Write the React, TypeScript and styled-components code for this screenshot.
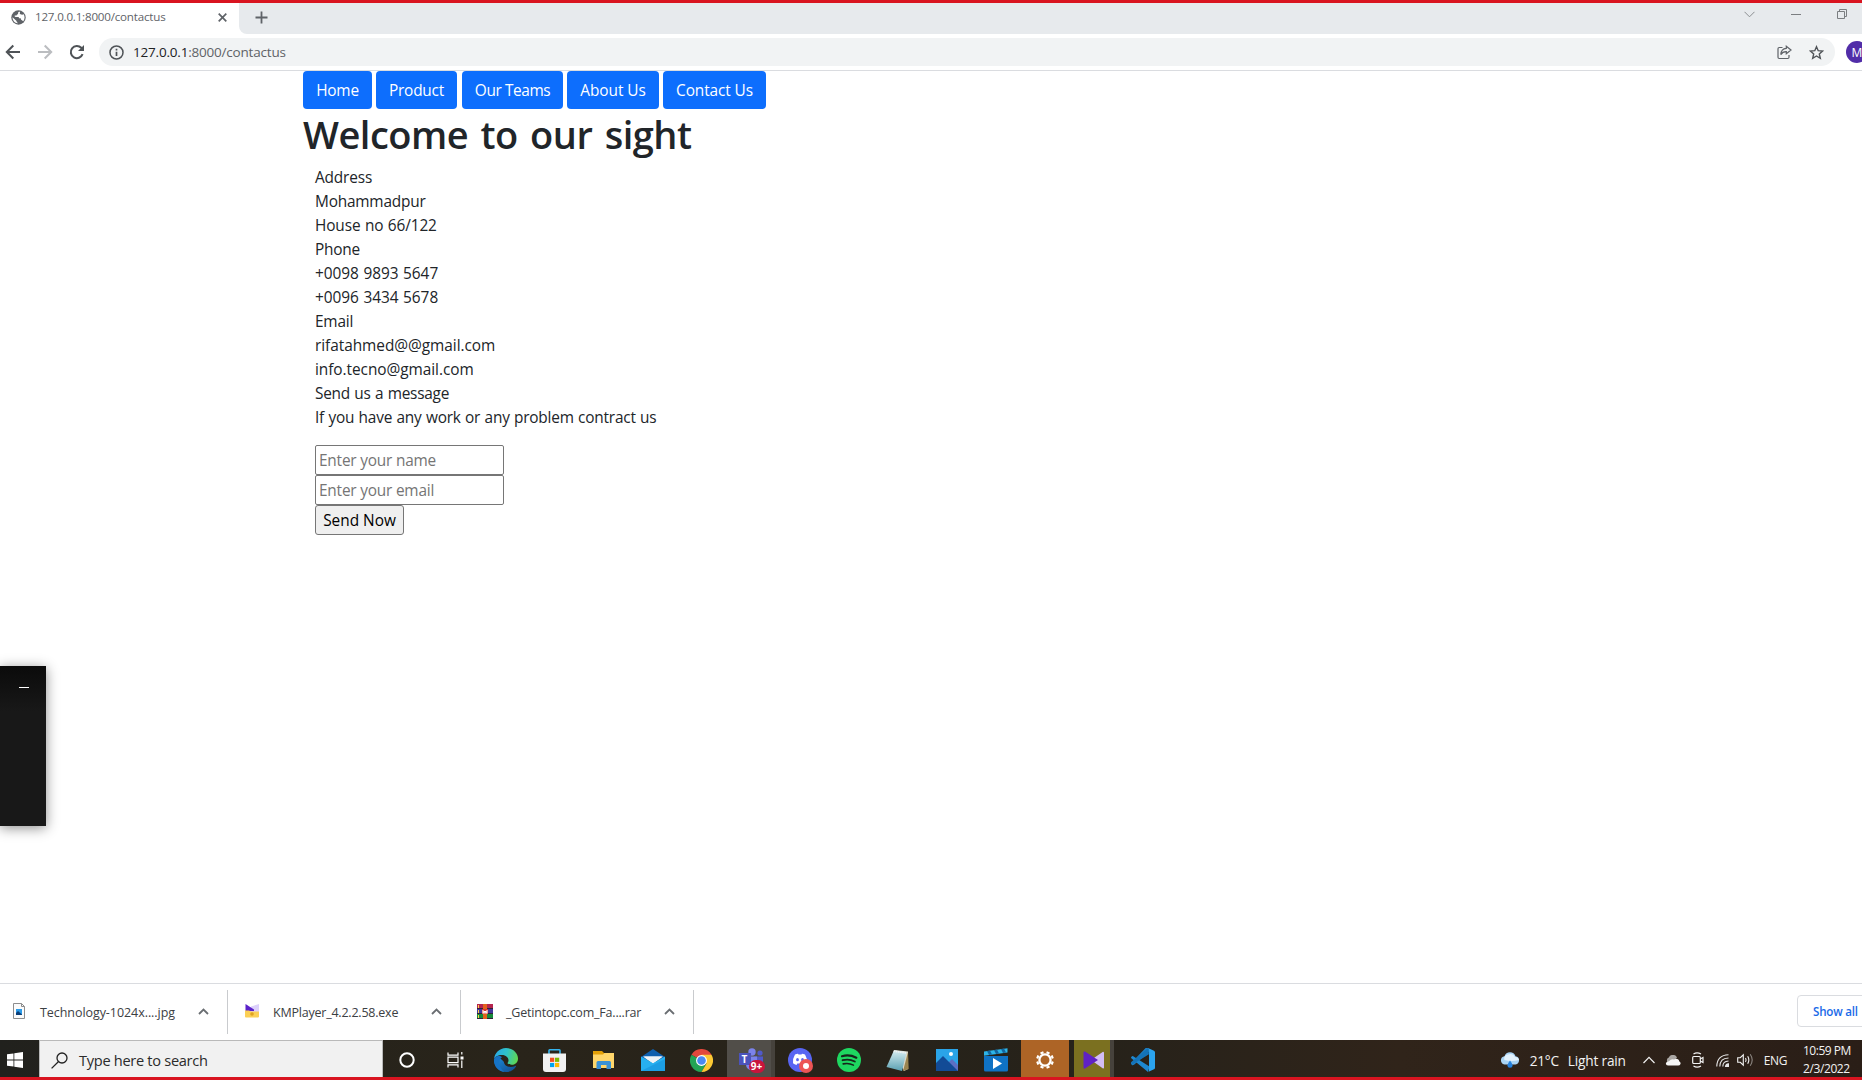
import React from "react";
import styled, { createGlobalStyle } from "styled-components";

const GlobalStyle = createGlobalStyle`
  * { box-sizing: border-box; }
  html, body { margin: 0; padding: 0; background: #fff; overflow: hidden; }
  body, button, input { font-family: "Open Sans", "Noto Sans", sans-serif; }
  svg { display: block; flex: none; }
`;

const Screen = styled.div`
  width: 1862px;
  height: 1080px;
  display: flex;
  flex-direction: column;
  overflow: hidden;
  background: #fff;
  border-top: 3px solid #d91420;
  border-bottom: 3px solid #d91420;
`;

const Text = styled.span<{ $size: number; $spacing?: number; $color?: string; $weight?: number }>`
  font-size: ${(p) => p.$size}px;
  letter-spacing: ${(p) => p.$spacing ?? 0}px;
  color: ${(p) => p.$color ?? "inherit"};
  font-weight: ${(p) => p.$weight ?? 400};
  white-space: pre;
`;

/* Browser chrome */
const TabStrip = styled.div`
  height: 31px;
  flex: none;
  display: flex;
  background: #fff;
`;
const Tab = styled.div`
  width: 239px;
  height: 31px;
  display: flex;
  align-items: center;
  padding: 0 12px 3px 11px;
`;
const TabTitle = styled.div`
  flex: 1;
  padding: 0 0 2px 9px;
  display: flex;
`;
const StripRest = styled.div`
  flex: 1;
  display: flex;
  align-items: center;
  justify-content: space-between;
  padding: 0 15px 3px 16px;
  background: #e7eaed;
  border-bottom-left-radius: 8px;
`;
const WindowButtons = styled.div`
  display: flex;
  align-items: center;
  gap: 36px;
  padding-bottom: 6px;
`;
const Toolbar = styled.div`
  height: 37px;
  flex: none;
  display: flex;
  align-items: center;
  border-bottom: 1px solid #dadce0;
  padding-left: 5px;
`;
const NavIcons = styled.div`
  width: 94px;
  flex: none;
  display: flex;
  align-items: center;
  gap: 16px;
`;
const AddressBar = styled.div`
  width: 1736px;
  flex: none;
  height: 28px;
  border-radius: 14px;
  background: #f1f3f4;
  display: flex;
  align-items: center;
  padding: 0 11px 0 10px;
`;
const Url = styled.div`
  flex: 1;
  padding-left: 9px;
  display: flex;
`;
const AddressIcons = styled.div`
  display: flex;
  gap: 17px;
`;
const Avatar = styled.div`
  width: 22px;
  height: 22px;
  margin-left: 11px;
  flex: none;
  border-radius: 50%;
  background: #512da8;
  color: #fff;
  display: flex;
  align-items: center;
  justify-content: center;
  font-size: 12px;
`;

/* Page */
const Page = styled.main`
  flex: 1;
  padding-left: 303px;
  color: #212529;
`;
const NavBar = styled.nav`
  display: flex;
  height: 38px;
`;
const NavButton = styled.button<{ $w: number; $gap: number; $spacing: number }>`
  width: ${(p) => p.$w}px;
  height: 38px;
  margin: 0 ${(p) => p.$gap}px 0 0;
  padding: 0;
  border: 0;
  border-radius: 4px;
  background: #0d6efd;
  color: #fff;
  font-size: 15.4px;
  letter-spacing: ${(p) => p.$spacing}px;
  white-space: nowrap;
`;
const Heading = styled.h1`
  margin: 0 0 8px;
  height: 48px;
  line-height: 50px;
  font-size: 38px;
  letter-spacing: -0.5px;
  word-spacing: 3px;
  font-weight: 600;
  white-space: nowrap;
`;
const Content = styled.div`
  padding-left: 12px;
`;
const Line = styled.div`
  height: 24px;
  line-height: 24px;
  padding-top: 1px;
  word-spacing: 0.6px;
  display: flex;
`;
const Form = styled.form`
  margin-top: 16px;
  display: flex;
  flex-direction: column;
  align-items: flex-start;
`;
const Field = styled.input`
  width: 189px;
  height: 30px;
  padding: 2px 3px 1px;
  border: 1px solid #767676;
  border-radius: 2px;
  background: #fff;
  font-size: 15.4px;
  letter-spacing: -0.2px;
  &::placeholder { color: #757575; opacity: 1; }
`;
const Submit = styled.button`
  width: 89px;
  height: 30px;
  padding: 1px 0 0;
  border: 1px solid #767676;
  border-radius: 3px;
  background: #efefef;
  color: #000;
`;

const FloatingPanel = styled.aside`
  position: absolute;
  left: 0;
  top: 666px;
  width: 46px;
  height: 160px;
  display: flex;
  justify-content: flex-end;
  padding: 21px 17px 0 0;
  background: linear-gradient(#0b0b0b, #181818 45px);
  box-shadow: 0 2px 12px rgba(0, 0, 0, 0.45);
`;
const Minimize = styled.span`
  width: 10px;
  height: 1px;
  background: #fff;
`;

/* Downloads shelf */
const Shelf = styled.div`
  height: 57px;
  flex: none;
  display: flex;
  border-top: 1px solid #dadce0;
  padding-top: 6px;
  background: #fff;
`;
const Download = styled.div<{ $w: number; $pad: number }>`
  width: ${(p) => p.$w}px;
  height: 44px;
  display: flex;
  align-items: center;
  padding: 0 18px 2px ${(p) => p.$pad}px;
  border-right: 1px solid #c9cbce;
`;
const FileName = styled.div<{ $pad: number }>`
  flex: 1;
  padding-left: ${(p) => p.$pad}px;
  padding-top: 3px;
  display: flex;
`;
const ShowAll = styled.button`
  margin: 5px -20px 0 auto;
  width: 85px;
  height: 32px;
  padding: 0 0 0 15px;
  text-align: left;
  background: #fff;
  border: 1px solid #dadce0;
  border-radius: 4px;
`;

/* Taskbar */
const Taskbar = styled.div`
  height: 37px;
  flex: none;
  display: flex;
  background: linear-gradient(90deg, #21211d 0, #29241a 500px, #26221a 1100px, #30241a 1400px, #2a1e17 1862px);
  color: #f2f2f2;
`;
const Start = styled.div`
  width: 39px;
  padding: 12px 0 0 7px;
`;
const Search = styled.div`
  width: 344px;
  display: flex;
  align-items: center;
  padding: 2px 0 0 11px;
  gap: 11px;
  background: #f1f1f1;
  border: 1px solid #b9b9b9;
  border-bottom: 0;
`;
const Slot = styled.div<{ $w: number; $lead?: number }>`
  width: ${(p) => p.$w}px;
  flex: none;
  padding-left: ${(p) => p.$lead ?? 0}px;
`;
const Cell = styled.div<{ $bg: string; $w: number; $shift: number; $stacked: boolean }>`
  width: ${(p) => p.$w}px;
  height: 37px;
  display: flex;
  align-items: center;
  justify-content: center;
  padding-top: 3px;
  padding-left: ${(p) => p.$shift}px;
  background: ${(p) => p.$bg};
  border-right: ${(p) => (p.$stacked ? "4px solid #46423c" : "0")};
`;
const Tray = styled.div`
  margin-left: auto;
  display: flex;
  align-items: center;
  padding: 3px 11px 0 0;
`;
const TrayItem = styled.div<{ $gap: number }>`
  margin-right: ${(p) => p.$gap}px;
  display: flex;
`;
const Clock = styled.div`
  width: 48px;
  display: flex;
  flex-direction: column;
  line-height: 18px;
`;

const Globe = () => (
  <svg width="15" height="15" viewBox="0 0 15 15">
    <circle cx="7.5" cy="7.5" r="7.2" fill="#5f6368" />
    <path d="M8.2 1.8c-1 .3-1.6 1.4-.9 2.2-.8.3-1.8.5-1.7 1.6H3.8c-.5.6.1 1.4.9 1.4h2.4c.7 0 1 .7.8 1.3H9.4c.6 0 .8.8.5 1.3l2.4 1.6c1.6-1.9 1.8-5.3.1-7.2-.5 1-1.8 1-2.2.2-.8.1-1.6-.2-1.4-1 .1-.6.3-1 .2-1.400z" fill="#fff" />
    <path d="M1.500 7.300l3.800 3.500c.4.500.5 1.700 1.800 2.400-3.200.1-5.600-2.500-5.600-5.900z" fill="#fff" />
  </svg>
);
const Cross = () => (
  <svg width="9" height="9" viewBox="0 0 9 9" stroke="#5f6368" strokeWidth="1.7"><path d="M.7.7l7.600 7.600M8.300.7L.7 8.300" /></svg>
);
const Plus = () => (
  <svg width="13" height="13" viewBox="0 0 13 13" stroke="#5f6368" strokeWidth="1.8"><path d="M6.500.5v12M.5 6.500h12" /></svg>
);
const Arrow = ({ flip }: { flip?: boolean }) => (
  <svg width="16" height="16" viewBox="0 0 16 16" fill="none" stroke={flip ? "#bbbdc0" : "#4f5357"} strokeWidth="2" transform={flip ? "scale(-1 1)" : undefined}>
    <path d="M15 8H2.500M8.300 1.500L1.800 8l6.500 6.500" />
  </svg>
);
const Reload = () => (
  <svg width="16" height="16" viewBox="0 0 16 16" fill="none" stroke="#4f5357" strokeWidth="2">
    <path d="M13.600 10.200A6.100 6.100 0 1 1 12.300 3.800L14 5.500" />
    <path d="M15 1v6H9z" fill="#4f5357" stroke="none" />
  </svg>
);
const Info = () => (
  <svg width="15" height="15" viewBox="0 0 15 15" fill="none" stroke="#4f5357" strokeWidth="1.5">
    <circle cx="7.500" cy="7.500" r="6.500" /><path d="M7.500 6.700v4.300M7.500 3.800v1.600" strokeWidth="1.700" />
  </svg>
);
const Share = () => (
  <svg width="15" height="15" viewBox="0 0 15 15" fill="none" stroke="#5f6368" strokeWidth="1.200">
    <path d="M5.500 2.500H2.200Q1 2.500 1 3.700v8.600q0 1.200 1.200 1.200h8.600q1.200 0 1.200-1.200V10" />
    <path d="M9.300 1.300L14 5 9.300 8.700V6.700C6.500 6.600 5 7.600 3.800 9.600 4 6.200 5.800 3.700 9.300 3.400z" />
  </svg>
);
const Star = () => (
  <svg width="15" height="15" viewBox="0 0 15 15" fill="none" stroke="#4f5357" strokeWidth="1.400">
    <path d="M7.500 1.700l1.700 4 4.400.4-3.300 2.900 1 4.300-3.800-2.300-3.800 2.300 1-4.300L1.400 6.100l4.400-.4z" />
  </svg>
);
const ChevronUp = () => (
  <svg width="11" height="7" viewBox="0 0 11 7" fill="none" stroke="#6a6e72" strokeWidth="1.800"><path d="M1 6l4.500-4.500L10 6" /></svg>
);
const JpgFile = () => (
  <svg width="12" height="16" viewBox="0 0 12 16">
    <path d="M.5.5h8l3 3v12H.5z" fill="#fbfbfb" stroke="#8d8d8d" /><path d="M8.500.5v3h3" fill="none" stroke="#8d8d8d" />
    <path d="M3 6h6v6H3z" fill="#2c9be8" /><path d="M3 12V10l2-2 4 3.500v.5z" fill="#0a3e78" />
  </svg>
);
const KmFile = () => (
  <svg width="14" height="14" viewBox="0 0 14 14">
    <path d="M6 2.500L14 0v9H4z" fill="#dcd0fb" /><path d="M.5 0L9 5.500V7H.5z" fill="#5b21c9" />
    <path d="M0 6.500h4L6 7.500h8V12.500q0 1-1 1H1q-1 0-1-1z" fill="#fbcf55" /><circle cx="7" cy="10" r="1.800" fill="#dfa320" />
  </svg>
);
const RarFile = () => (
  <svg width="16" height="15" viewBox="0 0 16 15">
    <path d="M0 0h16v5H0z" fill="#b5244f" /><path d="M0 5h16v5H0z" fill="#41379b" /><path d="M0 10h16v5H0z" fill="#168a3a" />
    <path d="M0 4.500h16M0 9.500h16M0 14.500h16" stroke="#31203a" />
    <path d="M6 0h4v15H6z" fill="#e2611c" /><path d="M5 5h6v5H5z" fill="#d8382c" />
    <path d="M6 6v3h1.300V7.500h1.400V9H10V6" fill="none" stroke="#fff" strokeWidth="1.100" />
    <path d="M1.500 1v3M1.500 6v3M1.500 11v3" stroke="#ffd34a" />
  </svg>
);
const WindowsLogo = () => (
  <svg width="16" height="16" viewBox="0 0 16 16" fill="#fff">
    <path d="M0 2.300l6.500-.9v6.200H0zM7.300 1.300L16 0v7.600H7.300zM0 8.400h6.500v6.200L0 13.700zM7.300 8.400H16V16l-8.700-1.300z" />
  </svg>
);
const Magnifier = () => (
  <svg width="17" height="17" viewBox="0 0 17 17" fill="none" stroke="#222" strokeWidth="1.300"><circle cx="11" cy="6" r="5" /><path d="M7.300 9.700L.6 16.400" /></svg>
);
const Cortana = () => (
  <svg width="16" height="16" viewBox="0 0 16 16"><circle cx="8" cy="8" r="6.700" fill="none" stroke="#fff" strokeWidth="2" /></svg>
);
const TaskView = () => (
  <svg width="17" height="16" viewBox="0 0 17 16" fill="none" stroke="#fff" strokeWidth="1.200">
    <path d="M1 .5v2.700h10V.5M1 15.500v-2.700h10v2.700M1 5.200h10v5.500H1zM14.800 0v2.500M14.800 8.500V16" /><path d="M13.500 4.500h3v3h-3z" fill="#fff" stroke="none" />
  </svg>
);
const Edge = () => (
  <svg width="24" height="24" viewBox="0 0 24 24">
    <defs>
      <linearGradient id="edgeTop" x1="0" y1=".3" x2="1" y2=".5"><stop offset="0" stopColor="#28a8e8" /><stop offset=".5" stopColor="#2fc3c8" /><stop offset="1" stopColor="#5fd752" /></linearGradient>
      <linearGradient id="edgeLow" x1="0" y1="0" x2="1" y2="1"><stop offset="0" stopColor="#1b8ddd" /><stop offset="1" stopColor="#124a8c" /></linearGradient>
    </defs>
    <path d="M0 12C0 17 4 24 12 24c4.500 0 8-2 10-5.500.2-.5-.2-.9-.7-.6-5 2.300-11 .6-11.500-4.200C6 9 1 8 0 12z" fill="url(#edgeLow)" />
    <path d="M.1 11C.5 5 5.500 0 12 0c7 0 12 5 12 10.500 0 4-3 6.300-6.300 6.300-2.500 0-4.400-1-4.200-1.800.1-.5 1-1 1-2.800 0-2.500-2.600-5.200-6.500-5.200C4 7 .8 9 .1 11z" fill="url(#edgeTop)" />
    <path d="M8 9.200C4 11.500 4 19.500 10.500 23.900 4 23.500 0 18 0 12.500 0 8 6 7 8 9.200z" fill="#1673c6" />
  </svg>
);
const Store = () => (
  <svg width="23" height="23" viewBox="0 0 23 23">
    <path d="M6 5V1.500Q6 .8 6.700.8h9.600q.7 0 .7.700V5" fill="none" stroke="#35b4ee" strokeWidth="1.600" />
    <path d="M0 4.500h23V20q0 3-3 3H3q-3 0-3-3z" fill="#f2f2f2" />
    <path d="M7 8.700h4.200v4.200H7z" fill="#f25022" /><path d="M12 8.700h4.200v4.200H12z" fill="#7fba00" /><path d="M7 13.900h4.200v4.200H7z" fill="#00a4ef" /><path d="M12 13.900h4.200v4.200H12z" fill="#ffb900" />
  </svg>
);
const Explorer = () => (
  <svg width="23" height="20" viewBox="0 0 23 20">
    <path d="M1 1h9l2 2h10v4H1z" fill="#e3a008" /><path d="M1 4.500h10L12.500 3H22v15H1z" fill="#ffd66b" />
    <path d="M4.500 19v-6.500q0-1.500 1.500-1.500h11.500q1.500 0 1.500 1.500V19h-4.500v-4h-5.500v4z" fill="#3a92d6" />
  </svg>
);
const Mail = () => (
  <svg width="24" height="22" viewBox="0 0 24 22">
    <path d="M0 8L12 0l12 8v3H0z" fill="#0f5fae" /><path d="M2 7.500h20L12 15z" fill="#f1f1f1" />
    <path d="M0 7.500L12 14l12-6.500V22H0z" fill="#27b0f0" /><path d="M3 7.400h18l-9 6.800z" fill="#eef3f7" /><path d="M0 22l24-12v12z" fill="#1593dc" opacity=".6" />
  </svg>
);
const Chrome = () => (
  <svg width="23" height="23" viewBox="0 0 24 24">
    <path d="M12 12L1.600 6A12 12 0 0 1 22.400 6z" fill="#e2483d" /><path d="M12 12L1.600 6A12 12 0 0 0 12 24l5-9z" fill="#23a455" />
    <path d="M12 6h10.400A12 12 0 0 1 12 24l5.200-9z" fill="#fcc934" /><circle cx="12" cy="12" r="5.700" fill="#fff" /><circle cx="12" cy="12" r="4.500" fill="#4a89f3" />
  </svg>
);
const TeamsWrap = styled.div`
  position: relative;
  width: 26px;
  height: 25px;
`;
const Badge = styled.span`
  position: absolute;
  left: 10px;
  top: 12px;
  width: 16px;
  height: 13px;
  border-radius: 7px;
  background: #c9143c;
  color: #fff;
  font-size: 10px;
  font-weight: 700;
  line-height: 13px;
  text-align: center;
`;
const TeamsLetter = styled.span`
  position: absolute;
  left: 0;
  top: 5px;
  width: 12px;
  height: 12px;
  background: #4b53bc;
  color: #fff;
  font-size: 10px;
  font-weight: 700;
  line-height: 12px;
  text-align: center;
`;
const Teams = () => (
  <TeamsWrap>
    <svg width="26" height="25" viewBox="0 0 26 25">
      <circle cx="13" cy="4" r="3.700" fill="#7b83eb" /><circle cx="21" cy="5" r="2.600" fill="#5059c9" />
      <path d="M15 8.500h9v7a4 4 0 0 1-8 2z" fill="#5059c9" /><path d="M7 8.500h11v8a5.500 5.500 0 0 1-11 0z" fill="#7b83eb" />
    </svg>
    <TeamsLetter>T</TeamsLetter>
    <Badge>9+</Badge>
  </TeamsWrap>
);
const Discord = () => (
  <svg width="25" height="25" viewBox="0 0 25 25">
    <circle cx="12" cy="12" r="12" fill="#5865f2" />
    <path d="M7 6.500Q9 5.600 10 5.700l.5.900h3l.5-.9q1.200 0 3 .8 2.500 4 2 8.800-1.600 1.300-3.500 1.600l-.8-1.400h-5.400l-.8 1.400q-2-.3-3.500-1.600-.5-4.800 2-8.800z" fill="#fff" />
    <ellipse cx="9.500" cy="11.700" rx="1.400" ry="1.600" fill="#5865f2" /><ellipse cx="14.500" cy="11.700" rx="1.400" ry="1.600" fill="#5865f2" />
    <circle cx="18" cy="18" r="7" fill="#ed5555" /><circle cx="18" cy="18" r="3" fill="#fff" />
  </svg>
);
const Spotify = () => (
  <svg width="24" height="24" viewBox="0 0 24 24" fill="none" stroke="#16251b" strokeLinecap="round">
    <circle cx="12" cy="12" r="12" fill="#1ed760" stroke="none" />
    <path d="M5 8.200q7.500-2 14.300 1.500" strokeWidth="2.200" /><path d="M5.600 12.200q6.500-1.700 12.200 1.300" strokeWidth="1.900" /><path d="M6.200 15.900q5.500-1.300 10.200 1.200" strokeWidth="1.600" />
  </svg>
);
const Notepad = () => (
  <svg width="23" height="23" viewBox="0 0 23 23">
    <defs><linearGradient id="note" x1="0" y1="0" x2="0" y2="1"><stop offset="0" stopColor="#d7eef2" /><stop offset="1" stopColor="#5aa0b2" /></linearGradient></defs>
    <path d="M8 1l14 1.500V20l-4 2z" fill="#dcd8c8" /><path d="M22 3l.7 17L17 22z" fill="#9b8551" />
    <path d="M8 1.200L20.500 3 16 22 .5 18z" fill="url(#note)" /><path d="M7.600 2.200L20.500 4" stroke="#f2f2f2" strokeWidth="1.600" strokeDasharray="1.500 .7" />
  </svg>
);
const Photos = () => (
  <svg width="22" height="22" viewBox="0 0 22 22">
    <path d="M0 0h22v22H0z" fill="#2aa4e8" /><path d="M12 14l4-4 6 6v6h-8z" fill="#5c6fc4" /><path d="M0 14L7 7l15 15H0z" fill="#124b96" /><circle cx="15" cy="5" r="2" fill="#fff" />
  </svg>
);
const Movies = () => (
  <svg width="24" height="24" viewBox="0 0 24 24">
    <path d="M0 8h24v14q0 1.500-1.500 1.500h-21Q0 23.500 0 22z" fill="#0f72c4" /><path d="M0 3.500L23.500.2V4.500L0 7.800z" fill="#2cb4e8" />
    <path d="M3 3l3-.5 2 4-3 .5zM10 2l3-.4 2 4-3 .4zM17 1l3-.4 2 4-3 .4z" fill="#13659f" /><path d="M9 10l9 5.600L9 21z" fill="#fff" />
  </svg>
);
const Gear = () => (
  <svg width="20" height="20" viewBox="0 0 20 20" fill="none" stroke="#fff">
    <circle cx="10" cy="10" r="5.600" strokeWidth="2.300" />
    <path d="M16.200 12.600l2 .8M12.600 16.200l.8 2M7.400 16.200l-.8 2M3.800 12.600l-2 .8M3.800 7.400l-2-.8M7.400 3.800l-.8-2M12.600 3.800l.8-2M16.200 7.400l2-.8" strokeWidth="3.200" />
  </svg>
);
const KmPlayer = () => (
  <svg width="22" height="18" viewBox="0 0 22 18">
    <path d="M20 .7q1 0 1 1v15q0 1-1 .8L8 9z" fill="#d3bdf5" /><path d="M.5 1.500Q.5 0 2 .6L15 9 2 17.500Q.5 18 .5 16.600z" fill="#5f22c4" />
  </svg>
);
const VsCode = () => (
  <svg width="24" height="24" viewBox="0 0 24 24">
    <path d="M17 0l1.500 6L3 19.200 2.200 19.600Q1.500 20 1 19.500L.3 18.700q-.6-.6 0-1.300z" transform="translate(0 -2.500)" fill="#1d7fc4" />
    <path d="M17 24L.3 10.200q-.6-.6 0-1.200L1 8.200q.5-.5 1.200 0L18.500 18.500z" fill="#1e88d0" />
    <path d="M17 0L.3 14q-.6.6 0 1.200l.7.700q.5.500 1.200 0L18 6.200z" fill="#1473b8" />
    <path d="M17 0l6 2.700q1 .5 1 1.500v15.600q0 1-1 1.500L17 24q1-.5 1-1.500V1.500Q18 .5 17 0z" fill="#2ba3ee" />
    <path d="M18 6.800v10.400L11 12z" fill="#2a2219" />
  </svg>
);
const Weather = () => (
  <svg width="20" height="16" viewBox="0 0 20 16">
    <path d="M4.500 12.500a4.200 4.200 0 0 1 0-8.300A5.800 5.800 0 0 1 15.500 4.200a4.200 4.200 0 0 1 0 8.300z" fill="#a9d4f5" />
    <path d="M4.500 8A4 4 0 0 1 8 2.500 5 5 0 0 1 15 5 4 4 0 0 1 19 8Q12 10 4.500 8z" fill="#e3f2fd" /><path d="M10 8.500q2.500 3.200 2.500 4.800a2.500 2.500 0 0 1-5 0Q7.500 11.700 10 8.500z" fill="#2582dd" />
  </svg>
);
const TrayChevron = () => (
  <svg width="12" height="8" viewBox="0 0 12 8" fill="none" stroke="#f2f2f2" strokeWidth="1.200"><path d="M.5 7L6 1.300 11.500 7" /></svg>
);
const Cloud = () => (
  <svg width="16" height="11" viewBox="0 0 16 11"><path d="M3.500 8a3 3 0 0 1 .3-5.500A4.500 4.500 0 0 1 12 2.500L7 8z" fill="#aaa7a4" /><path d="M3 10.500q-2.500-.5-2-2.500.5-1.500 3-1.700 2-2.600 5-1.800L11 3.700q3 0 3.200 2.600 2.200 1.500 1 3.200-.4 1-2 1z" fill="#f5f5f5" /></svg>
);
const MeetNow = () => (
  <svg width="12" height="16" viewBox="0 0 12 16" fill="none" stroke="#f2f2f2" strokeWidth="1.200">
    <rect x=".7" y="4.500" width="7.600" height="7" rx="1" /><path d="M8.300 7l2.700-1.500v5L8.300 9M1.500 2Q5 -.2 9 2M1.500 14Q5 16.200 9 14" />
  </svg>
);
const Wifi = () => (
  <svg width="13" height="13" viewBox="0 0 13 13" fill="none" stroke="#e6e6e6" strokeWidth="1.100">
    <path d="M.8 12.500Q1 1.200 12.500.8M3.800 12.500Q4 4.200 12.500 4M6.800 12.500Q7 7.200 12.500 7" /><path d="M9.500 12.500q.2-2.400 3-2.700v2.700z" fill="#e6e6e6" />
  </svg>
);
const Speaker = () => (
  <svg width="17" height="14" viewBox="0 0 17 14" fill="none" stroke="#f2f2f2" strokeWidth="1.100">
    <path d="M.7 4.700h2.600L6.300 1.800v10.400L3.300 9.300H.7z" /><path d="M8.500 5q1.200 2 0 4M10.700 3.300q2.300 3.700 0 7.400" /><path d="M13.200 1.300q4 5.700 0 11.400" stroke="#8b8580" />
  </svg>
);

const nav = [
  { label: "Home", w: 69, gap: 4, spacing: -0.2 },
  { label: "Product", w: 81, gap: 5, spacing: -0.2 },
  { label: "Our Teams", w: 101, gap: 4, spacing: -0.4 },
  { label: "About Us", w: 92, gap: 4, spacing: -0.05 },
  { label: "Contact Us", w: 103, gap: 0, spacing: -0.1 },
];

const lines: [string, number][] = [
  ["Address", -0.15],
  ["Mohammadpur", -0.2],
  ["House no 66/122", -0.12],
  ["Phone", -0.2],
  ["+0098 9893 5647", -0.03],
  ["+0096 3434 5678", -0.03],
  ["Email", -0.2],
  ["rifatahmed@@gmail.com", -0.04],
  ["info.tecno@gmail.com", -0.05],
  ["Send us a message", -0.24],
  ["If you have any work or any problem contract us", -0.21],
];

const apps: { icon: React.ReactNode; slot: number; w?: number; lead?: number; bg?: string; stacked?: boolean; shift?: number }[] = [
  { icon: <Cortana />, slot: 48 },
  { icon: <TaskView />, slot: 51 },
  { icon: <Edge />, slot: 48 },
  { icon: <Store />, slot: 49 },
  { icon: <Explorer />, slot: 50 },
  { icon: <Mail />, slot: 48 },
  { icon: <Chrome />, slot: 50 },
  { icon: <Teams />, slot: 49, bg: "#514e49", stacked: true, shift: 5 },
  { icon: <Discord />, slot: 49 },
  { icon: <Spotify />, slot: 48 },
  { icon: <Notepad />, slot: 50 },
  { icon: <Photos />, slot: 49 },
  { icon: <Movies />, slot: 49 },
  { icon: <Gear />, slot: 49, bg: "#ad6426" },
  { icon: <KmPlayer />, slot: 49, lead: 4, w: 40, bg: "#7b7020", stacked: true, shift: 3 },
  { icon: <VsCode />, slot: 49 },
];

export default function App() {
  return (
    <Screen>
      <GlobalStyle />
      <TabStrip>
        <Tab>
          <Globe />
          <TabTitle><Text $size={11.6} $spacing={-0.2} $color="#5f6368">127.0.0.1:8000/contactus</Text></TabTitle>
          <Cross />
        </Tab>
        <StripRest>
          <Plus />
          <WindowButtons>
            <svg width="11" height="7" viewBox="0 0 11 7" fill="none" stroke="#8b8e91"><path d="M.5.8l5 5 5-5" /></svg>
            <svg width="10" height="1" viewBox="0 0 10 1"><path d="M0 0h10v1H0z" fill="#7b7e81" /></svg>
            <svg width="10" height="10" viewBox="0 0 10 10" fill="none" stroke="#7b7e81"><path d="M.5 2.500h7v7h-7zM2.500 2.500v-2h7v7h-2" /></svg>
          </WindowButtons>
        </StripRest>
      </TabStrip>
      <Toolbar>
        <NavIcons><Arrow /><Arrow flip /><Reload /></NavIcons>
        <AddressBar>
          <Info />
          <Url>
            <Text $size={13.5} $spacing={-0.2} $color="#202124">127.0.0.1</Text>
            <Text $size={13.5} $spacing={-0.2} $color="#5f6368">:8000/contactus</Text>
          </Url>
          <AddressIcons><Share /><Star /></AddressIcons>
        </AddressBar>
        <Avatar>M</Avatar>
      </Toolbar>
      <Page>
        <NavBar>
          {nav.map((n) => <NavButton key={n.label} $w={n.w} $gap={n.gap} $spacing={n.spacing}>{n.label}</NavButton>)}
        </NavBar>
        <Heading>Welcome to our sight</Heading>
        <Content>
          {lines.map(([t, s]) => <Line key={t}><Text $size={15.4} $spacing={s}>{t}</Text></Line>)}
          <Form>
            <Field placeholder="Enter your name" />
            <Field placeholder="Enter your email" />
            <Submit type="button"><Text $size={15.4}>Send Now</Text></Submit>
          </Form>
        </Content>
      </Page>
      <FloatingPanel><Minimize /></FloatingPanel>
      <Shelf>
        <Download $w={228} $pad={13}>
          <JpgFile /><FileName $pad={15}><Text $size={12.5} $spacing={-0.06} $color="#3c4043">Technology-1024x....jpg</Text></FileName><ChevronUp />
        </Download>
        <Download $w={233} $pad={17}>
          <KmFile /><FileName $pad={14}><Text $size={12.5} $spacing={-0.22} $color="#3c4043">KMPlayer_4.2.2.58.exe</Text></FileName><ChevronUp />
        </Download>
        <Download $w={233} $pad={16}>
          <RarFile /><FileName $pad={13}><Text $size={12.5} $spacing={-0.2} $color="#3c4043">_Getintopc.com_Fa....rar</Text></FileName><ChevronUp />
        </Download>
        <ShowAll><Text $size={11.6} $spacing={-0.2} $color="#1a6ae8" $weight={600}>Show all</Text></ShowAll>
      </Shelf>
      <Taskbar>
        <Start><WindowsLogo /></Start>
        <Search><Magnifier /><Text $size={14.6} $spacing={-0.3} $color="#2b2b2b">Type here to search</Text></Search>
        {apps.map((a, i) => (
          <Slot key={i} $w={a.slot} $lead={a.lead}>
            <Cell $w={a.w ?? 48} $bg={a.bg ?? "transparent"} $stacked={!!a.stacked} $shift={a.shift ?? 0}>{a.icon}</Cell>
          </Slot>
        ))}
        <Tray>
          <TrayItem $gap={10}><Weather /></TrayItem>
          <TrayItem $gap={9}><Text $size={13.7} $spacing={-0.25}>21°C</Text></TrayItem>
          <TrayItem $gap={17}><Text $size={13.7} $spacing={-0.2}>Light rain</Text></TrayItem>
          <TrayItem $gap={10}><TrayChevron /></TrayItem>
          <TrayItem $gap={11}><Cloud /></TrayItem>
          <TrayItem $gap={12}><MeetNow /></TrayItem>
          <TrayItem $gap={8}><Wifi /></TrayItem>
          <TrayItem $gap={10}><Speaker /></TrayItem>
          <TrayItem $gap={16}><Text $size={12} $spacing={-0.4}>ENG</Text></TrayItem>
          <Clock><Text $size={12} $spacing={-0.5}>10:59 PM</Text><Text $size={12} $spacing={-0.4}>2/3/2022</Text></Clock>
        </Tray>
      </Taskbar>
    </Screen>
  );
}
